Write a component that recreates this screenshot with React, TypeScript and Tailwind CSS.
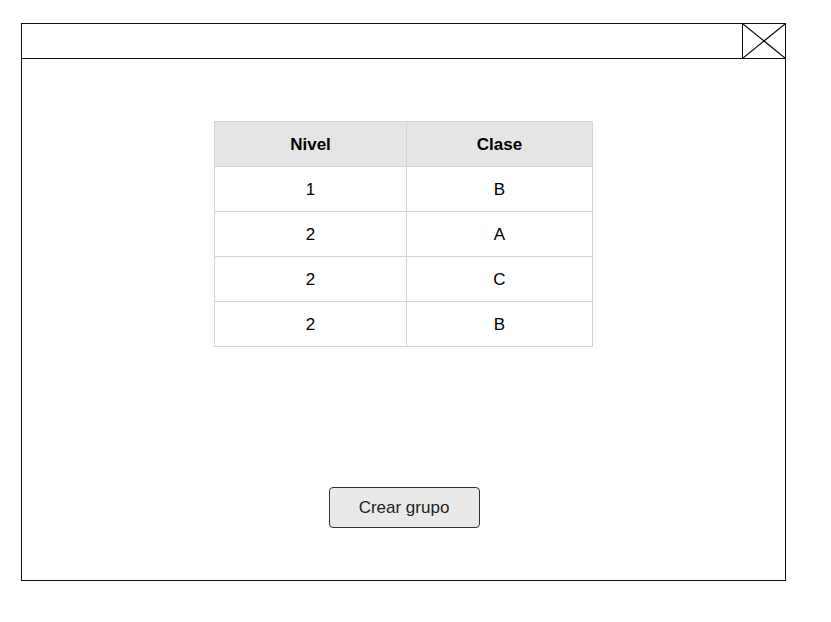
import React from 'react'

const rows = [
  { nivel: '1', clase: 'B' },
  { nivel: '2', clase: 'A' },
  { nivel: '2', clase: 'C' },
  { nivel: '2', clase: 'B' },
]

export default function App() {
  return (
    <div className="min-h-screen bg-white pl-[21px] pt-[23px]" style={{ fontFamily: '"Liberation Sans", Arial, sans-serif' }}>
      <div className="flex h-[558px] w-[765px] flex-col border border-[#111]">
        <div className="flex h-[35px] justify-end border-b border-[#111]">
          <div className="h-full w-[43px] border-l border-[#111]">
            <svg width="42" height="34" viewBox="0 0 42 34" className="block">
              <line x1="0" y1="0" x2="42" y2="34" stroke="#111" strokeWidth="1.2" />
              <line x1="42" y1="0" x2="0" y2="34" stroke="#111" strokeWidth="1.2" />
            </svg>
          </div>
        </div>

        <table className="mx-auto mt-[62px] w-[379px] table-fixed border-collapse text-[17px] text-black">
          <thead>
            <tr className="h-[45px] bg-[#e5e5e5]">
              <th className="w-[192px] border border-[#d4d4d4] pt-[1px] text-center font-bold">Nivel</th>
              <th className="border border-[#d4d4d4] pt-[1px] text-center font-bold">Clase</th>
            </tr>
          </thead>
          <tbody>
            {rows.map((r, i) => (
              <tr key={i} className="h-[45px]">
                <td className="border border-[#d4d4d4] pt-[1px] text-center">{r.nivel}</td>
                <td className="border border-[#d4d4d4] pt-[1px] text-center">{r.clase}</td>
              </tr>
            ))}
          </tbody>
        </table>

        <div className="mt-[140px] flex justify-center pl-[1px]">
          <button className="h-[41px] w-[151px] rounded-[4px] border border-[#333] bg-[#e9e9e9] text-[17px] text-[#222]">
            Crear grupo
          </button>
        </div>
      </div>
    </div>
  )
}
